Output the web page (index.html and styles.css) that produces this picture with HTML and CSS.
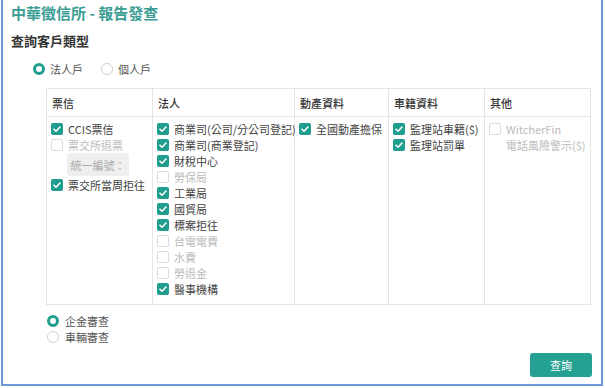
FILE: index.html
```html
<!DOCTYPE html>
<html lang="zh-Hant">
<head>
<meta charset="utf-8">
<link rel="stylesheet" href="styles.css">
</head>
<body>
<div class="frame">
  <h1 class="title">中華徵信所 - 報告發查</h1>
  <h2 class="subtitle">查詢客戶類型</h2>
  <div class="radio-row">
    <label class="radio"><span class="dot on"></span>法人戶</label>
    <label class="radio"><span class="dot"></span>個人戶</label>
  </div>

  <table class="grid">
    <thead>
      <tr>
        <th class="c1">票信</th>
        <th class="c2">法人</th>
        <th class="c3">動產資料</th>
        <th class="c4">車籍資料</th>
        <th class="c5">其他</th>
      </tr>
    </thead>
    <tbody>
      <tr>
        <td>
          <div class="item"><span class="cb on"></span>CCIS票信</div>
          <div class="item off"><span class="cb"></span>票交所退票</div>
          <div class="idbox">統一編號：</div>
          <div class="item"><span class="cb on"></span>票交所當周拒往</div>
        </td>
        <td>
          <div class="item"><span class="cb on"></span>商業司(公司/分公司登記)</div>
          <div class="item"><span class="cb on"></span>商業司(商業登記)</div>
          <div class="item"><span class="cb on"></span>財稅中心</div>
          <div class="item off"><span class="cb"></span>勞保局</div>
          <div class="item"><span class="cb on"></span>工業局</div>
          <div class="item"><span class="cb on"></span>國貿局</div>
          <div class="item"><span class="cb on"></span>標案拒往</div>
          <div class="item off"><span class="cb"></span>台電電費</div>
          <div class="item off"><span class="cb"></span>水費</div>
          <div class="item off"><span class="cb"></span>勞退金</div>
          <div class="item"><span class="cb on"></span>醫事機構</div>
        </td>
        <td>
          <div class="item"><span class="cb on"></span>全國動產擔保</div>
        </td>
        <td>
          <div class="item"><span class="cb on"></span>監理站車籍($)</div>
          <div class="item"><span class="cb on"></span>監理站罰單</div>
        </td>
        <td>
          <div class="item off multi"><span class="cb"></span><span>WitcherFin<br>電話風險警示($)</span></div>
        </td>
      </tr>
    </tbody>
  </table>

  <div class="review">
    <label class="radio"><span class="dot on"></span>企金審查</label>
    <label class="radio"><span class="dot"></span>車輛審查</label>
  </div>

  <div class="actions">
    <button class="btn">查詢</button>
  </div>
</div>
</body>
</html>
```

FILE: styles.css
```css
* { box-sizing: border-box; }
html, body {
  margin: 0;
  padding: 0;
  background: #fff;
}
body {
  font-family: "Noto Sans CJK TC", "Noto Sans", sans-serif;
  color: #444;
}
.frame {
  margin-left: 1px;
  width: 602px;
  height: 386px;
  border-left: 2px solid #6d98d3;
  border-right: 2px solid #6d98d3;
  border-bottom: 2px solid #6d98d3;
  padding: 3px 0 0 8px;
  position: relative;
}
.title {
  margin: 0;
  font-size: 15px;
  line-height: 20px;
  font-weight: 700;
  color: #3b9d93;
}
.subtitle {
  margin: 9px 0 0;
  font-size: 13px;
  line-height: 18px;
  font-weight: 700;
  color: #333;
}
.radio-row {
  display: flex;
  gap: 18px;
  margin: 11px 0 0 22px;
  height: 16px;
  align-items: center;
}
.radio {
  display: flex;
  align-items: center;
  gap: 5px;
  font-size: 11px;
  color: #555;
}
.dot {
  width: 12px;
  height: 12px;
  border-radius: 50%;
  border: 1px solid #cfcfcf;
  background: #fff;
  display: inline-block;
}
.dot.on {
  border: 3.5px solid #1f9d8e;
}
.grid {
  margin: 11px 0 0 35px;
  width: 544px;
  border-collapse: collapse;
  table-layout: fixed;
  font-size: 11px;
}
.grid th, .grid td {
  border: 1px solid #e6e6e6;
}
.grid th {
  height: 28px;
  text-align: left;
  font-weight: 500;
  color: #333;
  padding: 0 5px;
  font-size: 11px;
}
.c1 { width: 106px; }
.c2 { width: 142px; }
.c3 { width: 94px; }
.c4 { width: 96px; }
.c5 { width: 106px; }
.grid td {
  vertical-align: top;
  padding: 4px 0 0 4px;
  height: 188px;
}
.item {
  display: flex;
  align-items: center;
  gap: 5px;
  height: 16px;
  white-space: nowrap;
  color: #444;
}
.item.off { color: #bbb; }
.item.multi {
  align-items: flex-start;
  line-height: 16px;
  height: auto;
}
.item.multi .cb { margin-top: 2px; }
.cb {
  flex: none;
  width: 12px;
  height: 12px;
  border-radius: 2px;
  border: 1px solid #dcdcdc;
  background: #fff;
  display: inline-block;
}
.cb.on {
  border: none;
  background: #1f9d8e url("data:image/svg+xml,%3Csvg xmlns='http://www.w3.org/2000/svg' viewBox='0 0 12 12'%3E%3Cpath d='M3 6.2l2 2 4-4.2' fill='none' stroke='%23fff' stroke-width='1.6' stroke-linecap='round' stroke-linejoin='round'/%3E%3C/svg%3E") center/12px 12px no-repeat;
}
.idbox {
  margin: 0 0 1px 16px;
  width: 62px;
  height: 23px;
  background: #efefef;
  border-radius: 3px;
  color: #aaa;
  font-size: 11px;
  display: flex;
  align-items: center;
  justify-content: center;
}
.review {
  margin: 8px 0 0 36px;
  display: flex;
  flex-direction: column;
}
.review .radio {
  height: 16px;
  gap: 6px;
}
.actions {
  display: flex;
  justify-content: flex-end;
  padding-right: 9px;
  margin-top: 8px;
}
.btn {
  width: 62px;
  height: 24px;
  border: none;
  border-radius: 3px;
  background: #24a192;
  color: #fff;
  font-family: inherit;
  font-size: 11px;
}
```
